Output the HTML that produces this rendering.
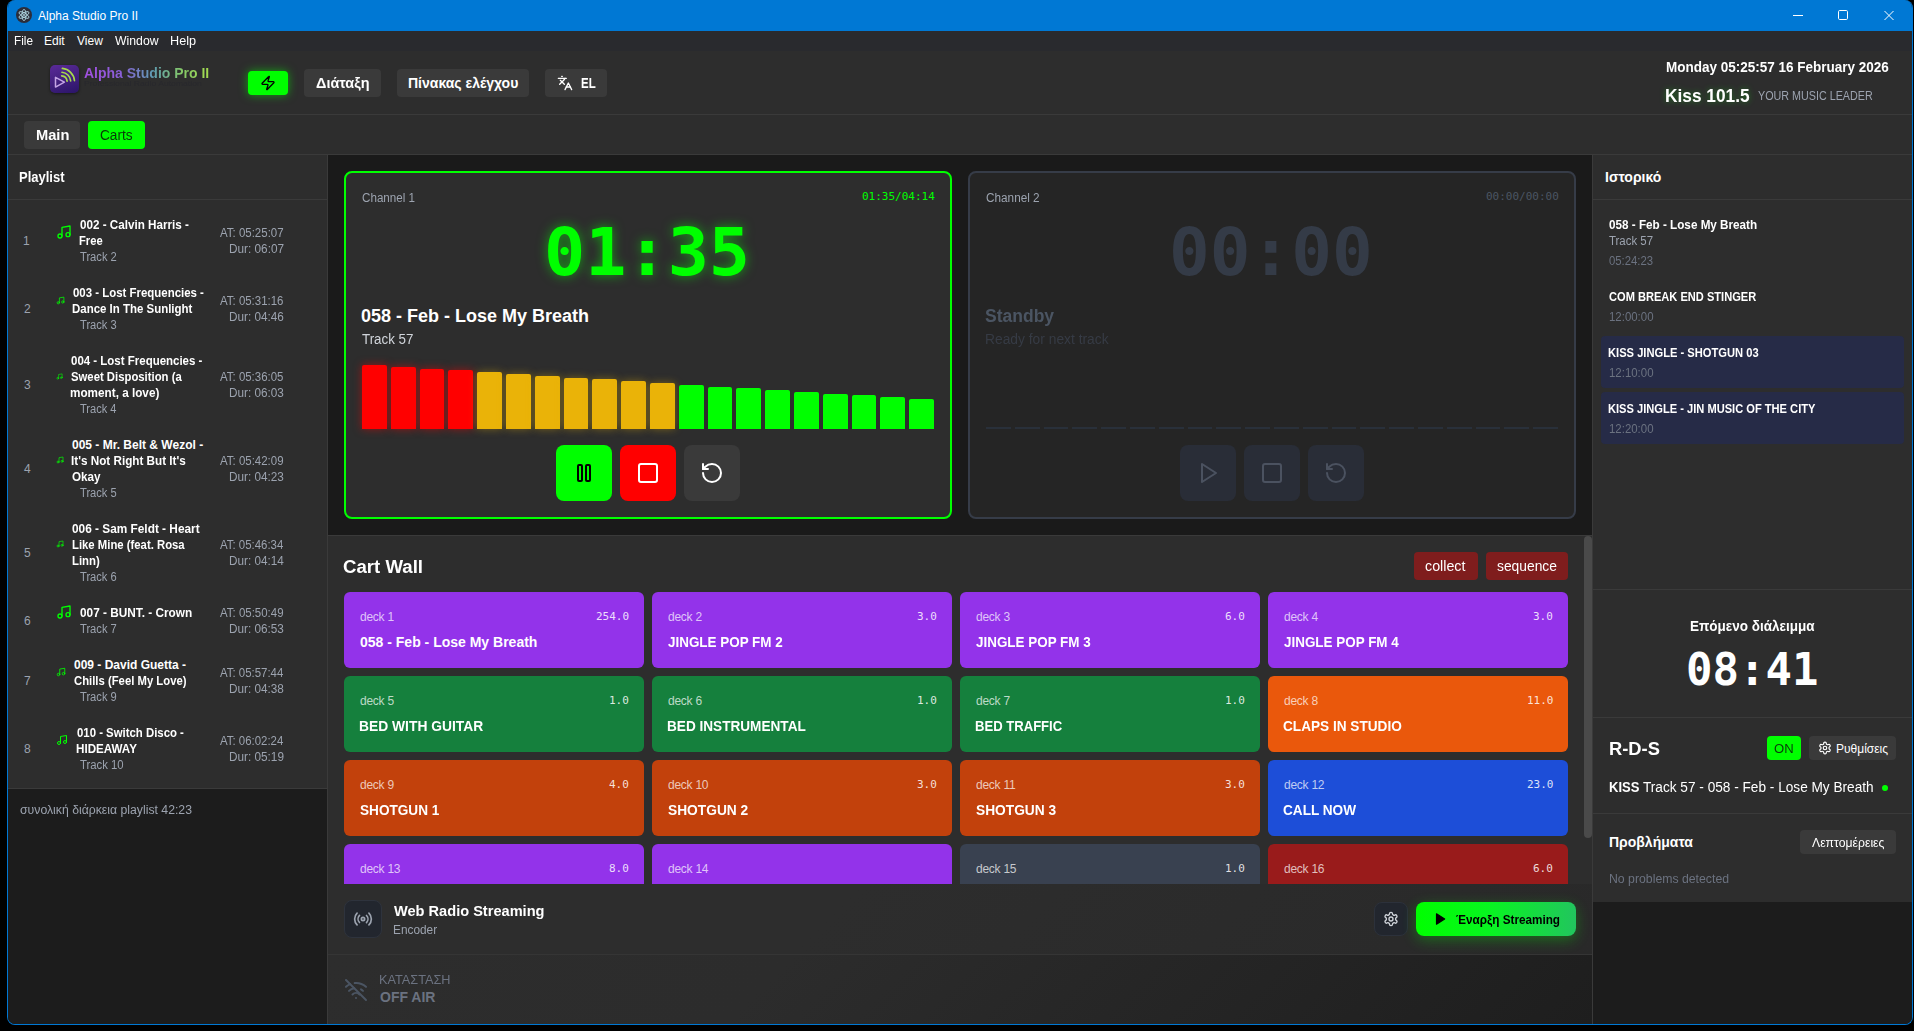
<!DOCTYPE html>
<html lang="el">
<head>
<meta charset="utf-8">
<title>Alpha Studio Pro II</title>
<style>
*{box-sizing:border-box;margin:0;padding:0}
html,body{width:1914px;height:1031px;overflow:hidden;background:#000}
body{font-family:"Liberation Sans",sans-serif;color:#fff;position:relative;font-size:12px;line-height:16px}
.a{position:absolute;white-space:nowrap}
.mono{font-family:"DejaVu Sans Mono","Liberation Mono",monospace}
.b{font-weight:bold}
svg{display:block}
.ic{fill:none;stroke:currentColor;stroke-width:2;stroke-linecap:round;stroke-linejoin:round}
#win{position:absolute;left:7px;top:0;width:1906px;height:1025px;background:#1a1a1a;border:1px solid #0078d4;border-top:none;border-radius:8px;overflow:hidden}
#pg{position:absolute;left:-8px;top:0;width:1914px;height:1031px}
.hl{position:absolute;height:1px;background:#3a3a3a}
.vl{position:absolute;width:1px;background:#3a3a3a}
.btn{position:absolute;background:#3a3a3a;border-radius:4px;color:#fff;white-space:nowrap}
.g{color:#9ca3af}
.g2{color:#6b7280}
.panel{position:absolute;background:#2d2d2d}
</style>
</head>
<body>
<div id="win"><div id="pg">
<div class="a" style="left:7px;top:0px;width:1906px;height:31px;background:#0078d4;"></div>
<div class="a" style="left:16px;top:7px;width:16px;height:16px;background:#2b2d3a;border-radius:8px;"><svg width="16" height="16" viewBox="0 0 16 16" fill="none" stroke="#b9e3ee" stroke-width="0.8"><ellipse cx="8" cy="8" rx="5.6" ry="2.1" transform="rotate(30 8 8)"/><ellipse cx="8" cy="8" rx="5.6" ry="2.1" transform="rotate(90 8 8)"/><ellipse cx="8" cy="8" rx="5.6" ry="2.1" transform="rotate(150 8 8)"/><circle cx="8" cy="8" r="0.9" fill="#b9e3ee" stroke="none"/></svg></div>
<div class="a" style="left:38px;top:9px;font-size:12px;line-height:14px;">Alpha Studio Pro II</div>
<svg class="a" style="left:1788px;top:5px" width="112" height="20" viewBox="0 0 112 20" fill="none" stroke="#fff" stroke-width="1"><path d="M5 10.5h10"/><rect x="50.5" y="5.5" width="9" height="9" rx="1.2"/><path d="M96.5 6l9 9M105.5 6l-9 9"/></svg>
<div class="a" style="left:8px;top:31px;width:1904px;height:20px;background:#292a2e;"></div>
<div class="a" style="left:13.56px;top:34px;font-size:12px;line-height:14px;transform:scaleX(0.9787);transform-origin:0 0;">File</div>
<div class="a" style="left:44px;top:34px;font-size:12px;line-height:14px;">Edit</div>
<div class="a" style="left:77px;top:34px;font-size:12px;line-height:14px;">View</div>
<div class="a" style="left:114.94px;top:34px;font-size:12px;line-height:14px;transform:scaleX(1.0197);transform-origin:0 0;">Window</div>
<div class="a" style="left:170.49px;top:34px;font-size:12px;line-height:14px;transform:scaleX(1.0551);transform-origin:0 0;">Help</div>
<div class="a" style="left:8px;top:51px;width:1904px;height:104px;background:#2d2d2d;"></div>
<div class="a" style="left:8px;top:114px;width:1904px;height:1px;background:#3a3a3a;"></div>
<div class="a" style="left:8px;top:154px;width:1904px;height:1px;background:#3a3a3a;"></div>
<div class="a" style="left:50px;top:65px;width:29px;height:28px;border-radius:5px;background:linear-gradient(160deg,#5a2a98 0%,#43207f 50%,#2a1468 100%);box-shadow:0 1px 3px rgba(0,0,0,.5)"><svg width="29" height="28" viewBox="0 0 29 28" fill="none" stroke-linecap="round" stroke-linejoin="round"><path d="M5.5 12.3v9.8l8.9-4.9z" stroke="#c4a4e6" stroke-width="1.5"/><path d="M11.71 10.82A5.9 5.9 0 0 1 17.08 16.19" stroke="#a6d94c" stroke-width="1.7"/><path d="M12.03 7.24A9.5 9.5 0 0 1 20.66 15.87" stroke="#a6d94c" stroke-width="1.7"/><path d="M12.36 3.45A13.3 13.3 0 0 1 24.45 15.54" stroke="#a6d94c" stroke-width="1.7"/></svg></div>
<div class="a b" style="left:84px;top:65px;font-size:14px;line-height:16px;background:linear-gradient(90deg,#a24fe0 0%,#8a5fd8 30%,#5f9bb0 55%,#84c868 78%,#a4dc50 100%);-webkit-background-clip:text;background-clip:text;color:transparent;">Alpha Studio Pro II</div>
<div class="a" style="left:83.81px;top:80px;font-size:7px;line-height:7px;transform:scaleX(1.2301);transform-origin:0 0;color:#28282d;">Professional Radio Automation</div>
<div class="a" style="left:248px;top:71px;width:40px;height:24px;background:#00ff00;border-radius:4px;box-shadow:0 0 10px rgba(0,255,0,.55);"></div>
<svg class="ic a" style="left:260px;top:75px;color:#000;" width="16" height="16" viewBox="0 0 24 24" stroke-width="2"><path d="M4 14a1 1 0 0 1-.78-1.63l9.9-10.2a.5.5 0 0 1 .86.46l-1.92 6.02A1 1 0 0 0 13 10h7a1 1 0 0 1 .78 1.63l-9.9 10.2a.5.5 0 0 1-.86-.46l1.92-6.02A1 1 0 0 0 11 14z"/></svg>
<div class="a" style="left:304px;top:69px;width:77px;height:28px;background:#3a3a3a;border-radius:4px;"></div>
<div class="a b" style="left:315.92px;top:75px;font-size:14px;line-height:16px;transform:scaleX(1.0317);transform-origin:0 0;">Διάταξη</div>
<div class="a" style="left:397px;top:69px;width:132px;height:28px;background:#3a3a3a;border-radius:4px;"></div>
<div class="a b" style="left:408px;top:75px;font-size:14px;line-height:16px;">Πίνακας ελέγχου</div>
<div class="a" style="left:545px;top:69px;width:62px;height:28px;background:#3a3a3a;border-radius:4px;"></div>
<svg class="ic a" style="left:557px;top:75px;color:#fff;" width="16" height="16" viewBox="0 0 24 24" stroke-width="2"><path d="m5 8 6 6"/><path d="m4 14 6-6 2-3"/><path d="M2 5h12"/><path d="M7 2h1"/><path d="m22 22-5-10-5 10"/><path d="M14 18h6"/></svg>
<div class="a b" style="left:580.76px;top:75px;font-size:14px;line-height:16px;transform:scaleX(0.8172);transform-origin:0 0;">EL</div>
<div class="a b" style="left:1665.72px;top:59px;font-size:14px;line-height:16px;transform:scaleX(0.9637);transform-origin:0 0;">Monday 05:25:57 16 February 2026</div>
<div class="a b" style="left:1665.48px;top:86px;font-size:18px;line-height:20px;transform:scaleX(0.9606);transform-origin:0 0;text-shadow:0 0 6px rgba(0,255,0,.35);">Kiss 101.5</div>
<div class="a" style="left:1758.28px;top:89px;font-size:12px;line-height:14px;transform:scaleX(0.8962);transform-origin:0 0;color:#9ca3af;">YOUR MUSIC LEADER</div>
<div class="a" style="left:24px;top:121px;width:56px;height:28px;background:#3a3a3a;border-radius:4px;"></div>
<div class="a b" style="left:35.55px;top:127px;font-size:14px;line-height:16px;transform:scaleX(1.0465);transform-origin:0 0;">Main</div>
<div class="a" style="left:88px;top:121px;width:57px;height:28px;background:#00ff00;border-radius:4px;"></div>
<div class="a" style="left:100.32px;top:127px;font-size:14px;line-height:16px;transform:scaleX(0.9761);transform-origin:0 0;color:#083808;">Carts</div>
<div class="a" style="left:8px;top:155px;width:319px;height:634px;background:#2d2d2d;"></div>
<div class="a" style="left:8px;top:789px;width:319px;height:236px;background:#1c1c1c;"></div>
<div class="a" style="left:327px;top:155px;width:1px;height:870px;background:#3a3a3a;"></div>
<div class="a" style="left:8px;top:199px;width:319px;height:1px;background:#3a3a3a;"></div>
<div class="a" style="left:8px;top:788px;width:319px;height:1px;background:#3a3a3a;"></div>
<div class="a b" style="left:19.16px;top:169px;font-size:14px;line-height:16px;transform:scaleX(0.9281);transform-origin:0 0;">Playlist</div>
<div class="a" style="left:23px;top:234px;font-size:12px;line-height:14px;color:#9ca3af;">1</div>
<svg class="ic a" style="left:56px;top:224px;color:#00ff00;" width="16" height="16" viewBox="0 0 24 24" stroke-width="2"><path d="M9 18V5l12-2v13"/><circle cx="6" cy="18" r="3"/><circle cx="18" cy="16" r="3"/></svg>
<div class="a b" style="left:79.53px;top:218px;font-size:12px;line-height:14px;transform:scaleX(0.9719);transform-origin:0 0;">002 - Calvin Harris -</div>
<div class="a b" style="left:79.27px;top:234px;font-size:12px;line-height:14px;transform:scaleX(0.9305);transform-origin:0 0;">Free</div>
<div class="a" style="left:80.28px;top:250px;font-size:12px;line-height:14px;transform:scaleX(0.9302);transform-origin:0 0;color:#9ca3af;">Track 2</div>
<div class="a" style="left:220.00px;top:226px;font-size:12px;line-height:14px;transform:scaleX(0.9563);transform-origin:0 0;color:#9ca3af;">AT: 05:25:07</div>
<div class="a" style="left:228.56px;top:242px;font-size:12px;line-height:14px;transform:scaleX(0.9820);transform-origin:0 0;color:#9ca3af;">Dur: 06:07</div>
<div class="a" style="left:24px;top:302px;font-size:12px;line-height:14px;color:#9ca3af;">2</div>
<svg class="ic a" style="left:56px;top:295.5px;color:#00ff00;" width="9" height="9" viewBox="0 0 24 24" stroke-width="2"><path d="M9 18V5l12-2v13"/><circle cx="6" cy="18" r="3"/><circle cx="18" cy="16" r="3"/></svg>
<div class="a b" style="left:72.54px;top:286px;font-size:12px;line-height:14px;transform:scaleX(0.9528);transform-origin:0 0;">003 - Lost Frequencies -</div>
<div class="a b" style="left:72.25px;top:302px;font-size:12px;line-height:14px;transform:scaleX(0.9552);transform-origin:0 0;">Dance In The Sunlight</div>
<div class="a" style="left:80.28px;top:318px;font-size:12px;line-height:14px;transform:scaleX(0.9274);transform-origin:0 0;color:#9ca3af;">Track 3</div>
<div class="a" style="left:220.00px;top:294px;font-size:12px;line-height:14px;transform:scaleX(0.9545);transform-origin:0 0;color:#9ca3af;">AT: 05:31:16</div>
<div class="a" style="left:228.56px;top:310px;font-size:12px;line-height:14px;transform:scaleX(0.9799);transform-origin:0 0;color:#9ca3af;">Dur: 04:46</div>
<div class="a" style="left:24px;top:378px;font-size:12px;line-height:14px;color:#9ca3af;">3</div>
<svg class="ic a" style="left:56px;top:372.5px;color:#00ff00;" width="7" height="7" viewBox="0 0 24 24" stroke-width="2"><path d="M9 18V5l12-2v13"/><circle cx="6" cy="18" r="3"/><circle cx="18" cy="16" r="3"/></svg>
<div class="a b" style="left:70.54px;top:354px;font-size:12px;line-height:14px;transform:scaleX(0.9565);transform-origin:0 0;">004 - Lost Frequencies -</div>
<div class="a b" style="left:70.66px;top:370px;font-size:12px;line-height:14px;transform:scaleX(0.9435);transform-origin:0 0;">Sweet Disposition (a</div>
<div class="a b" style="left:70.24px;top:386px;font-size:12px;line-height:14px;transform:scaleX(0.9778);transform-origin:0 0;">moment, a love)</div>
<div class="a" style="left:80.28px;top:402px;font-size:12px;line-height:14px;transform:scaleX(0.9231);transform-origin:0 0;color:#9ca3af;">Track 4</div>
<div class="a" style="left:220.00px;top:370px;font-size:12px;line-height:14px;transform:scaleX(0.9545);transform-origin:0 0;color:#9ca3af;">AT: 05:36:05</div>
<div class="a" style="left:228.56px;top:386px;font-size:12px;line-height:14px;transform:scaleX(0.9799);transform-origin:0 0;color:#9ca3af;">Dur: 06:03</div>
<div class="a" style="left:24px;top:462px;font-size:12px;line-height:14px;color:#9ca3af;">4</div>
<svg class="ic a" style="left:56px;top:456px;color:#00ff00;" width="8" height="8" viewBox="0 0 24 24" stroke-width="2"><path d="M9 18V5l12-2v13"/><circle cx="6" cy="18" r="3"/><circle cx="18" cy="16" r="3"/></svg>
<div class="a b" style="left:72px;top:438px;font-size:12px;line-height:14px;">005 - Mr. Belt &amp; Wezol -</div>
<div class="a b" style="left:71.24px;top:454px;font-size:12px;line-height:14px;transform:scaleX(0.9751);transform-origin:0 0;">It's Not Right But It's</div>
<div class="a b" style="left:71.53px;top:470px;font-size:12px;line-height:14px;transform:scaleX(0.9722);transform-origin:0 0;">Okay</div>
<div class="a" style="left:80.28px;top:486px;font-size:12px;line-height:14px;transform:scaleX(0.9274);transform-origin:0 0;color:#9ca3af;">Track 5</div>
<div class="a" style="left:220.00px;top:454px;font-size:12px;line-height:14px;transform:scaleX(0.9554);transform-origin:0 0;color:#9ca3af;">AT: 05:42:09</div>
<div class="a" style="left:228.56px;top:470px;font-size:12px;line-height:14px;transform:scaleX(0.9799);transform-origin:0 0;color:#9ca3af;">Dur: 04:23</div>
<div class="a" style="left:24px;top:546px;font-size:12px;line-height:14px;color:#9ca3af;">5</div>
<svg class="ic a" style="left:56px;top:540px;color:#00ff00;" width="8" height="8" viewBox="0 0 24 24" stroke-width="2"><path d="M9 18V5l12-2v13"/><circle cx="6" cy="18" r="3"/><circle cx="18" cy="16" r="3"/></svg>
<div class="a b" style="left:72.03px;top:522px;font-size:12px;line-height:14px;transform:scaleX(0.9863);transform-origin:0 0;">006 - Sam Feldt - Heart</div>
<div class="a b" style="left:71.76px;top:538px;font-size:12px;line-height:14px;transform:scaleX(0.9437);transform-origin:0 0;">Like Mine (feat. Rosa</div>
<div class="a b" style="left:71.76px;top:554px;font-size:12px;line-height:14px;transform:scaleX(0.9478);transform-origin:0 0;">Linn)</div>
<div class="a" style="left:80.28px;top:570px;font-size:12px;line-height:14px;transform:scaleX(0.9274);transform-origin:0 0;color:#9ca3af;">Track 6</div>
<div class="a" style="left:220.00px;top:538px;font-size:12px;line-height:14px;transform:scaleX(0.9519);transform-origin:0 0;color:#9ca3af;">AT: 05:46:34</div>
<div class="a" style="left:228.56px;top:554px;font-size:12px;line-height:14px;transform:scaleX(0.9766);transform-origin:0 0;color:#9ca3af;">Dur: 04:14</div>
<div class="a" style="left:24px;top:614px;font-size:12px;line-height:14px;color:#9ca3af;">6</div>
<svg class="ic a" style="left:56px;top:604px;color:#00ff00;" width="16" height="16" viewBox="0 0 24 24" stroke-width="2"><path d="M9 18V5l12-2v13"/><circle cx="6" cy="18" r="3"/><circle cx="18" cy="16" r="3"/></svg>
<div class="a b" style="left:79.53px;top:606px;font-size:12px;line-height:14px;transform:scaleX(0.9840);transform-origin:0 0;">007 - BUNT. - Crown</div>
<div class="a" style="left:80.28px;top:622px;font-size:12px;line-height:14px;transform:scaleX(0.9302);transform-origin:0 0;color:#9ca3af;">Track 7</div>
<div class="a" style="left:220.00px;top:606px;font-size:12px;line-height:14px;transform:scaleX(0.9554);transform-origin:0 0;color:#9ca3af;">AT: 05:50:49</div>
<div class="a" style="left:228.56px;top:622px;font-size:12px;line-height:14px;transform:scaleX(0.9799);transform-origin:0 0;color:#9ca3af;">Dur: 06:53</div>
<div class="a" style="left:24px;top:674px;font-size:12px;line-height:14px;color:#9ca3af;">7</div>
<svg class="ic a" style="left:56px;top:667px;color:#00ff00;" width="10" height="10" viewBox="0 0 24 24" stroke-width="2"><path d="M9 18V5l12-2v13"/><circle cx="6" cy="18" r="3"/><circle cx="18" cy="16" r="3"/></svg>
<div class="a b" style="left:74px;top:658px;font-size:12px;line-height:14px;">009 - David Guetta -</div>
<div class="a b" style="left:73.55px;top:674px;font-size:12px;line-height:14px;transform:scaleX(0.9424);transform-origin:0 0;">Chills (Feel My Love)</div>
<div class="a" style="left:80.28px;top:690px;font-size:12px;line-height:14px;transform:scaleX(0.9288);transform-origin:0 0;color:#9ca3af;">Track 9</div>
<div class="a" style="left:220.00px;top:666px;font-size:12px;line-height:14px;transform:scaleX(0.9519);transform-origin:0 0;color:#9ca3af;">AT: 05:57:44</div>
<div class="a" style="left:228.56px;top:682px;font-size:12px;line-height:14px;transform:scaleX(0.9799);transform-origin:0 0;color:#9ca3af;">Dur: 04:38</div>
<div class="a" style="left:24px;top:742px;font-size:12px;line-height:14px;color:#9ca3af;">8</div>
<svg class="ic a" style="left:56px;top:734px;color:#00ff00;" width="12" height="12" viewBox="0 0 24 24" stroke-width="2"><path d="M9 18V5l12-2v13"/><circle cx="6" cy="18" r="3"/><circle cx="18" cy="16" r="3"/></svg>
<div class="a b" style="left:76.54px;top:726px;font-size:12px;line-height:14px;transform:scaleX(0.9483);transform-origin:0 0;">010 - Switch Disco -</div>
<div class="a b" style="left:76.24px;top:742px;font-size:12px;line-height:14px;transform:scaleX(0.9690);transform-origin:0 0;">HIDEAWAY</div>
<div class="a" style="left:80.27px;top:758px;font-size:12px;line-height:14px;transform:scaleX(0.9442);transform-origin:0 0;color:#9ca3af;">Track 10</div>
<div class="a" style="left:220.00px;top:734px;font-size:12px;line-height:14px;transform:scaleX(0.9519);transform-origin:0 0;color:#9ca3af;">AT: 06:02:24</div>
<div class="a" style="left:228.56px;top:750px;font-size:12px;line-height:14px;transform:scaleX(0.9809);transform-origin:0 0;color:#9ca3af;">Dur: 05:19</div>
<div class="a" style="left:19.51px;top:803px;font-size:12px;line-height:14px;transform:scaleX(1.0204);transform-origin:0 0;color:#9ca3af;">συνολική διάρκεια playlist 42:23</div>
<div class="a" style="left:344px;top:171px;width:608px;height:348px;background:#2d2d2d;border-radius:8px;border:2px solid #00ff00;"></div>
<div class="a" style="left:361.92px;top:191px;font-size:12px;line-height:14px;transform:scaleX(0.9705);transform-origin:0 0;color:#9ca3af;">Channel 1</div>
<div class="a mono" style="left:862px;top:190px;font-size:11px;line-height:13px;color:#00ff00;">01:35/04:14</div>
<div class="a b mono" style="left:543.94px;top:214px;font-size:66px;line-height:77px;transform:scaleX(1.0372);transform-origin:0 0;color:#00ff00;text-shadow:0 0 12px rgba(0,255,0,.55);">01:35</div>
<div class="a b" style="left:361px;top:306px;font-size:18px;line-height:20px;">058 - Feb - Lose My Breath</div>
<div class="a" style="left:361.73px;top:331px;font-size:14px;line-height:16px;transform:scaleX(0.9543);transform-origin:0 0;color:#d1d5db;">Track 57</div>
<div class="a" style="left:362px;top:365px;width:24.8px;height:64px;background:#ff0000;border-radius:2px 2px 0 0;box-shadow:0 0 8px rgba(255,0,0,.5);"></div>
<div class="a" style="left:390.8px;top:366.8px;width:24.8px;height:62.2px;background:#ff0000;border-radius:2px 2px 0 0;box-shadow:0 0 8px rgba(255,0,0,.5);"></div>
<div class="a" style="left:419.6px;top:368.6px;width:24.8px;height:60.4px;background:#ff0000;border-radius:2px 2px 0 0;box-shadow:0 0 8px rgba(255,0,0,.5);"></div>
<div class="a" style="left:448.4px;top:370.4px;width:24.8px;height:58.6px;background:#ff0000;border-radius:2px 2px 0 0;box-shadow:0 0 8px rgba(255,0,0,.5);"></div>
<div class="a" style="left:477.2px;top:372.2px;width:24.8px;height:56.8px;background:#eab308;border-radius:2px 2px 0 0;box-shadow:0 0 8px rgba(234,179,8,.4);"></div>
<div class="a" style="left:506px;top:373.9px;width:24.8px;height:55px;background:#eab308;border-radius:2px 2px 0 0;box-shadow:0 0 8px rgba(234,179,8,.4);"></div>
<div class="a" style="left:534.8px;top:375.7px;width:24.8px;height:53.3px;background:#eab308;border-radius:2px 2px 0 0;box-shadow:0 0 8px rgba(234,179,8,.4);"></div>
<div class="a" style="left:563.6px;top:377.5px;width:24.8px;height:51.5px;background:#eab308;border-radius:2px 2px 0 0;box-shadow:0 0 8px rgba(234,179,8,.4);"></div>
<div class="a" style="left:592.4px;top:379.3px;width:24.8px;height:49.7px;background:#eab308;border-radius:2px 2px 0 0;box-shadow:0 0 8px rgba(234,179,8,.4);"></div>
<div class="a" style="left:621.2px;top:381.1px;width:24.8px;height:47.9px;background:#eab308;border-radius:2px 2px 0 0;box-shadow:0 0 8px rgba(234,179,8,.4);"></div>
<div class="a" style="left:650px;top:382.9px;width:24.8px;height:46.1px;background:#eab308;border-radius:2px 2px 0 0;box-shadow:0 0 8px rgba(234,179,8,.4);"></div>
<div class="a" style="left:678.8px;top:384.7px;width:24.8px;height:44.3px;background:#00ff00;border-radius:2px 2px 0 0;"></div>
<div class="a" style="left:707.6px;top:386.5px;width:24.8px;height:42.5px;background:#00ff00;border-radius:2px 2px 0 0;"></div>
<div class="a" style="left:736.4px;top:388.3px;width:24.8px;height:40.7px;background:#00ff00;border-radius:2px 2px 0 0;"></div>
<div class="a" style="left:765.2px;top:390.1px;width:24.8px;height:38.9px;background:#00ff00;border-radius:2px 2px 0 0;"></div>
<div class="a" style="left:794px;top:391.9px;width:24.8px;height:37.1px;background:#00ff00;border-radius:2px 2px 0 0;"></div>
<div class="a" style="left:822.8px;top:393.6px;width:24.8px;height:35.4px;background:#00ff00;border-radius:2px 2px 0 0;"></div>
<div class="a" style="left:851.6px;top:395.4px;width:24.8px;height:33.6px;background:#00ff00;border-radius:2px 2px 0 0;"></div>
<div class="a" style="left:880.4px;top:397.2px;width:24.8px;height:31.8px;background:#00ff00;border-radius:2px 2px 0 0;"></div>
<div class="a" style="left:909.2px;top:399px;width:24.8px;height:30px;background:#00ff00;border-radius:2px 2px 0 0;"></div>
<div class="a" style="left:556px;top:445px;width:56px;height:56px;background:#00ff00;border-radius:8px;"></div>
<svg class="ic a" style="left:572px;top:461px;color:#000;" width="24" height="24" viewBox="0 0 24 24" stroke-width="2"><rect x="14" y="4" width="4" height="16" rx="1"/><rect x="6" y="4" width="4" height="16" rx="1"/></svg>
<div class="a" style="left:620px;top:445px;width:56px;height:56px;background:#ff0000;border-radius:8px;"></div>
<svg class="ic a" style="left:636px;top:461px;color:#fff;" width="24" height="24" viewBox="0 0 24 24" stroke-width="2"><rect width="18" height="18" x="3" y="3" rx="2"/></svg>
<div class="a" style="left:684px;top:445px;width:56px;height:56px;background:#3a3a3a;border-radius:8px;"></div>
<svg class="ic a" style="left:700px;top:461px;color:#fff;" width="24" height="24" viewBox="0 0 24 24" stroke-width="2"><path d="M3 12a9 9 0 1 0 9-9 9.75 9.75 0 0 0-6.74 2.74L3 8"/><path d="M3 3v5h5"/></svg>
<div class="a" style="left:968px;top:171px;width:608px;height:348px;background:#252525;border-radius:8px;border:2px solid #363c48;"></div>
<div class="a" style="left:985.91px;top:191px;font-size:12px;line-height:14px;transform:scaleX(0.9809);transform-origin:0 0;color:#9ca3af;">Channel 2</div>
<div class="a mono" style="left:1486px;top:190px;font-size:11px;line-height:13px;color:#4b5563;">00:00/00:00</div>
<div class="a b mono" style="left:1169.34px;top:214px;font-size:66px;line-height:77px;transform:scaleX(1.0258);transform-origin:0 0;color:#343b47;">00:00</div>
<div class="a b" style="left:985.47px;top:306px;font-size:18px;line-height:20px;transform:scaleX(0.9733);transform-origin:0 0;color:#4b5563;">Standby</div>
<div class="a" style="left:984.90px;top:331px;font-size:14px;line-height:16px;transform:scaleX(0.9865);transform-origin:0 0;color:#363b45;">Ready for next track</div>
<div class="a" style="left:986px;top:427px;width:24.8px;height:2px;background:#29303a;"></div>
<div class="a" style="left:1014.8px;top:427px;width:24.8px;height:2px;background:#29303a;"></div>
<div class="a" style="left:1043.6px;top:427px;width:24.8px;height:2px;background:#29303a;"></div>
<div class="a" style="left:1072.4px;top:427px;width:24.8px;height:2px;background:#29303a;"></div>
<div class="a" style="left:1101.2px;top:427px;width:24.8px;height:2px;background:#29303a;"></div>
<div class="a" style="left:1130px;top:427px;width:24.8px;height:2px;background:#29303a;"></div>
<div class="a" style="left:1158.8px;top:427px;width:24.8px;height:2px;background:#29303a;"></div>
<div class="a" style="left:1187.6px;top:427px;width:24.8px;height:2px;background:#29303a;"></div>
<div class="a" style="left:1216.4px;top:427px;width:24.8px;height:2px;background:#29303a;"></div>
<div class="a" style="left:1245.2px;top:427px;width:24.8px;height:2px;background:#29303a;"></div>
<div class="a" style="left:1274px;top:427px;width:24.8px;height:2px;background:#29303a;"></div>
<div class="a" style="left:1302.8px;top:427px;width:24.8px;height:2px;background:#29303a;"></div>
<div class="a" style="left:1331.6px;top:427px;width:24.8px;height:2px;background:#29303a;"></div>
<div class="a" style="left:1360.4px;top:427px;width:24.8px;height:2px;background:#29303a;"></div>
<div class="a" style="left:1389.2px;top:427px;width:24.8px;height:2px;background:#29303a;"></div>
<div class="a" style="left:1418px;top:427px;width:24.8px;height:2px;background:#29303a;"></div>
<div class="a" style="left:1446.8px;top:427px;width:24.8px;height:2px;background:#29303a;"></div>
<div class="a" style="left:1475.6px;top:427px;width:24.8px;height:2px;background:#29303a;"></div>
<div class="a" style="left:1504.4px;top:427px;width:24.8px;height:2px;background:#29303a;"></div>
<div class="a" style="left:1533.2px;top:427px;width:24.8px;height:2px;background:#29303a;"></div>
<div class="a" style="left:1180px;top:445px;width:56px;height:56px;background:#292d37;border-radius:8px;"></div>
<svg class="ic a" style="left:1196px;top:461px;color:#4b5260;" width="24" height="24" viewBox="0 0 24 24" stroke-width="2"><polygon points="6 3 20 12 6 21 6 3"/></svg>
<div class="a" style="left:1244px;top:445px;width:56px;height:56px;background:#292d37;border-radius:8px;"></div>
<svg class="ic a" style="left:1260px;top:461px;color:#4b5260;" width="24" height="24" viewBox="0 0 24 24" stroke-width="2"><rect width="18" height="18" x="3" y="3" rx="2"/></svg>
<div class="a" style="left:1308px;top:445px;width:56px;height:56px;background:#292d37;border-radius:8px;"></div>
<svg class="ic a" style="left:1324px;top:461px;color:#4b5260;" width="24" height="24" viewBox="0 0 24 24" stroke-width="2"><path d="M3 12a9 9 0 1 0 9-9 9.75 9.75 0 0 0-6.74 2.74L3 8"/><path d="M3 3v5h5"/></svg>
<div class="a" style="left:328px;top:535px;width:1264px;height:1px;background:#3a3a3a;"></div>
<div class="a" style="left:328px;top:536px;width:1264px;height:489px;background:#2d2d2d;"></div>
<div class="a" style="left:1592px;top:155px;width:1px;height:870px;background:#3a3a3a;"></div>
<div class="a b" style="left:343.26px;top:557px;font-size:18px;line-height:20px;transform:scaleX(1.0342);transform-origin:0 0;">Cart Wall</div>
<div class="a" style="left:1414px;top:552px;width:64px;height:28px;background:#7f1d1d;border-radius:4px;"></div>
<div class="a" style="left:1425.23px;top:558px;font-size:14px;line-height:16px;transform:scaleX(1.0182);transform-origin:0 0;">collect</div>
<div class="a" style="left:1486px;top:552px;width:82px;height:28px;background:#7f1d1d;border-radius:4px;"></div>
<div class="a" style="left:1497.15px;top:558px;font-size:14px;line-height:16px;transform:scaleX(0.9870);transform-origin:0 0;">sequence</div>
<div class="a" style="left:328px;top:536px;width:1264px;height:348px;overflow:hidden">
<div class="a" style="left:16px;top:56px;width:300px;height:76px;background:#9333ea;border-radius:6px;"></div>
<div class="a" style="left:32px;top:74px;font-size:12px;line-height:14px;letter-spacing:-0.250px;color:rgba(255,255,255,.72);">deck 1</div>
<div class="a mono" style="left:268px;top:74px;font-size:11px;line-height:13px;color:rgba(255,255,255,.85);">254.0</div>
<div class="a b" style="left:32px;top:98px;font-size:14px;line-height:16px;">058 - Feb - Lose My Breath</div>
<div class="a" style="left:324px;top:56px;width:300px;height:76px;background:#9333ea;border-radius:6px;"></div>
<div class="a" style="left:340px;top:74px;font-size:12px;line-height:14px;letter-spacing:-0.250px;color:rgba(255,255,255,.72);">deck 2</div>
<div class="a mono" style="left:589px;top:74px;font-size:11px;line-height:13px;color:rgba(255,255,255,.85);">3.0</div>
<div class="a b" style="left:339.80px;top:98px;font-size:14px;line-height:16px;transform:scaleX(0.9597);transform-origin:0 0;">JINGLE POP FM 2</div>
<div class="a" style="left:632px;top:56px;width:300px;height:76px;background:#9333ea;border-radius:6px;"></div>
<div class="a" style="left:648px;top:74px;font-size:12px;line-height:14px;letter-spacing:-0.250px;color:rgba(255,255,255,.72);">deck 3</div>
<div class="a mono" style="left:897px;top:74px;font-size:11px;line-height:13px;color:rgba(255,255,255,.85);">6.0</div>
<div class="a b" style="left:647.80px;top:98px;font-size:14px;line-height:16px;transform:scaleX(0.9591);transform-origin:0 0;">JINGLE POP FM 3</div>
<div class="a" style="left:940px;top:56px;width:300px;height:76px;background:#9333ea;border-radius:6px;"></div>
<div class="a" style="left:956px;top:74px;font-size:12px;line-height:14px;letter-spacing:-0.250px;color:rgba(255,255,255,.72);">deck 4</div>
<div class="a mono" style="left:1205px;top:74px;font-size:11px;line-height:13px;color:rgba(255,255,255,.85);">3.0</div>
<div class="a b" style="left:955.80px;top:98px;font-size:14px;line-height:16px;transform:scaleX(0.9599);transform-origin:0 0;">JINGLE POP FM 4</div>
<div class="a" style="left:16px;top:140px;width:300px;height:76px;background:#15803d;border-radius:6px;"></div>
<div class="a" style="left:32px;top:158px;font-size:12px;line-height:14px;letter-spacing:-0.250px;color:rgba(255,255,255,.72);">deck 5</div>
<div class="a mono" style="left:281px;top:158px;font-size:11px;line-height:13px;color:rgba(255,255,255,.85);">1.0</div>
<div class="a b" style="left:31.10px;top:182px;font-size:14px;line-height:16px;transform:scaleX(0.9877);transform-origin:0 0;">BED WITH GUITAR</div>
<div class="a" style="left:324px;top:140px;width:300px;height:76px;background:#15803d;border-radius:6px;"></div>
<div class="a" style="left:340px;top:158px;font-size:12px;line-height:14px;letter-spacing:-0.250px;color:rgba(255,255,255,.72);">deck 6</div>
<div class="a mono" style="left:589px;top:158px;font-size:11px;line-height:13px;color:rgba(255,255,255,.85);">1.0</div>
<div class="a b" style="left:339.12px;top:182px;font-size:14px;line-height:16px;transform:scaleX(0.9715);transform-origin:0 0;">BED INSTRUMENTAL</div>
<div class="a" style="left:632px;top:140px;width:300px;height:76px;background:#15803d;border-radius:6px;"></div>
<div class="a" style="left:648px;top:158px;font-size:12px;line-height:14px;letter-spacing:-0.250px;color:rgba(255,255,255,.72);">deck 7</div>
<div class="a mono" style="left:897px;top:158px;font-size:11px;line-height:13px;color:rgba(255,255,255,.85);">1.0</div>
<div class="a b" style="left:647.15px;top:182px;font-size:14px;line-height:16px;transform:scaleX(0.9343);transform-origin:0 0;">BED TRAFFIC</div>
<div class="a" style="left:940px;top:140px;width:300px;height:76px;background:#ea580c;border-radius:6px;"></div>
<div class="a" style="left:956px;top:158px;font-size:12px;line-height:14px;letter-spacing:-0.250px;color:rgba(255,255,255,.72);">deck 8</div>
<div class="a mono" style="left:1199px;top:158px;font-size:11px;line-height:13px;color:rgba(255,255,255,.85);">11.0</div>
<div class="a b" style="left:955.46px;top:182px;font-size:14px;line-height:16px;transform:scaleX(0.9730);transform-origin:0 0;">CLAPS IN STUDIO</div>
<div class="a" style="left:16px;top:224px;width:300px;height:76px;background:#c2410c;border-radius:6px;"></div>
<div class="a" style="left:32px;top:242px;font-size:12px;line-height:14px;letter-spacing:-0.250px;color:rgba(255,255,255,.72);">deck 9</div>
<div class="a mono" style="left:281px;top:242px;font-size:11px;line-height:13px;color:rgba(255,255,255,.85);">4.0</div>
<div class="a b" style="left:31.59px;top:266px;font-size:14px;line-height:16px;transform:scaleX(0.9713);transform-origin:0 0;">SHOTGUN 1</div>
<div class="a" style="left:324px;top:224px;width:300px;height:76px;background:#c2410c;border-radius:6px;"></div>
<div class="a" style="left:340px;top:242px;font-size:12px;line-height:14px;letter-spacing:-0.250px;color:rgba(255,255,255,.72);">deck 10</div>
<div class="a mono" style="left:589px;top:242px;font-size:11px;line-height:13px;color:rgba(255,255,255,.85);">3.0</div>
<div class="a b" style="left:339.59px;top:266px;font-size:14px;line-height:16px;transform:scaleX(0.9825);transform-origin:0 0;">SHOTGUN 2</div>
<div class="a" style="left:632px;top:224px;width:300px;height:76px;background:#c2410c;border-radius:6px;"></div>
<div class="a" style="left:648px;top:242px;font-size:12px;line-height:14px;letter-spacing:-0.250px;color:rgba(255,255,255,.72);">deck 11</div>
<div class="a mono" style="left:897px;top:242px;font-size:11px;line-height:13px;color:rgba(255,255,255,.85);">3.0</div>
<div class="a b" style="left:647.59px;top:266px;font-size:14px;line-height:16px;transform:scaleX(0.9817);transform-origin:0 0;">SHOTGUN 3</div>
<div class="a" style="left:940px;top:224px;width:300px;height:76px;background:#1d4ed8;border-radius:6px;"></div>
<div class="a" style="left:956px;top:242px;font-size:12px;line-height:14px;letter-spacing:-0.250px;color:rgba(255,255,255,.72);">deck 12</div>
<div class="a mono" style="left:1199px;top:242px;font-size:11px;line-height:13px;color:rgba(255,255,255,.85);">23.0</div>
<div class="a b" style="left:955.46px;top:266px;font-size:14px;line-height:16px;transform:scaleX(0.9716);transform-origin:0 0;">CALL NOW</div>
<div class="a" style="left:16px;top:308px;width:300px;height:76px;background:#9333ea;border-radius:6px;"></div>
<div class="a" style="left:32px;top:326px;font-size:12px;line-height:14px;letter-spacing:-0.250px;color:rgba(255,255,255,.72);">deck 13</div>
<div class="a mono" style="left:281px;top:326px;font-size:11px;line-height:13px;color:rgba(255,255,255,.85);">8.0</div>
<div class="a" style="left:324px;top:308px;width:300px;height:76px;background:#9333ea;border-radius:6px;"></div>
<div class="a" style="left:340px;top:326px;font-size:12px;line-height:14px;letter-spacing:-0.250px;color:rgba(255,255,255,.72);">deck 14</div>
<div class="a" style="left:632px;top:308px;width:300px;height:76px;background:#394150;border-radius:6px;"></div>
<div class="a" style="left:648px;top:326px;font-size:12px;line-height:14px;letter-spacing:-0.250px;color:rgba(255,255,255,.72);">deck 15</div>
<div class="a mono" style="left:897px;top:326px;font-size:11px;line-height:13px;color:rgba(255,255,255,.85);">1.0</div>
<div class="a" style="left:940px;top:308px;width:300px;height:76px;background:#991b1b;border-radius:6px;"></div>
<div class="a" style="left:956px;top:326px;font-size:12px;line-height:14px;letter-spacing:-0.250px;color:rgba(255,255,255,.72);">deck 16</div>
<div class="a mono" style="left:1205px;top:326px;font-size:11px;line-height:13px;color:rgba(255,255,255,.85);">6.0</div>
</div>
<div class="a" style="left:1584px;top:536px;width:8px;height:302px;background:#4a4a4a;border-radius:4px;"></div>
<div class="a" style="left:328px;top:884px;width:1264px;height:71px;background:linear-gradient(135deg,#2d2d2d 0%,#2d2d2d 40%,#292929 100%);"></div>
<div class="a" style="left:328px;top:954px;width:1264px;height:1px;background:#353535;"></div>
<div class="a" style="left:328px;top:955px;width:1264px;height:70px;background:linear-gradient(135deg,#2d2d2d 0%,#2c2c2c 35%,#1e1e1e 100%);"></div>
<div class="a" style="left:344px;top:900px;width:38px;height:38px;background:#22262e;border-radius:8px;border:1px solid #2e333d;"></div>
<svg class="ic a" style="left:353px;top:909px;color:#9ca3af;" width="20" height="20" viewBox="0 0 24 24" stroke-width="2"><path d="M4.9 19.1C1 15.2 1 8.8 4.9 4.9"/><path d="M7.8 16.2c-2.3-2.3-2.3-6.1 0-8.5"/><circle cx="12" cy="12" r="2"/><path d="M16.2 7.8c2.3 2.3 2.3 6.1 0 8.5"/><path d="M19.1 4.9C23 8.8 23 15.1 19.1 19"/></svg>
<div class="a b" style="left:394.00px;top:903px;font-size:14px;line-height:16px;transform:scaleX(1.0418);transform-origin:0 0;">Web Radio Streaming</div>
<div class="a" style="left:393.05px;top:923px;font-size:12px;line-height:14px;transform:scaleX(0.9871);transform-origin:0 0;color:#9ca3af;">Encoder</div>
<div class="a" style="left:1374px;top:902px;width:34px;height:34px;background:#22262e;border-radius:8px;border:1px solid #2c313b;"></div>
<svg class="ic a" style="left:1383px;top:911px;color:#d1d5db;" width="16" height="16" viewBox="0 0 24 24" stroke-width="2"><path d="M12.22 2h-.44a2 2 0 0 0-2 2v.18a2 2 0 0 1-1 1.73l-.43.25a2 2 0 0 1-2 0l-.15-.08a2 2 0 0 0-2.73.73l-.22.38a2 2 0 0 0 .73 2.73l.15.1a2 2 0 0 1 1 1.72v.51a2 2 0 0 1-1 1.74l-.15.09a2 2 0 0 0-.73 2.73l.22.38a2 2 0 0 0 2.73.73l.15-.08a2 2 0 0 1 2 0l.43.25a2 2 0 0 1 1 1.73V20a2 2 0 0 0 2 2h.44a2 2 0 0 0 2-2v-.18a2 2 0 0 1 1-1.73l.43-.25a2 2 0 0 1 2 0l.15.08a2 2 0 0 0 2.73-.73l.22-.39a2 2 0 0 0-.73-2.73l-.15-.08a2 2 0 0 1-1-1.74v-.5a2 2 0 0 1 1-1.74l.15-.09a2 2 0 0 0 .73-2.73l-.22-.38a2 2 0 0 0-2.73-.73l-.15.08a2 2 0 0 1-2 0l-.43-.25a2 2 0 0 1-1-1.73V4a2 2 0 0 0-2-2z"/><circle cx="12" cy="12" r="3"/></svg>
<div class="a" style="left:1416px;top:902px;width:160px;height:34px;border-radius:8px;background:linear-gradient(90deg,#00ff00 0%,#08f520 45%,#22c55e 100%);box-shadow:0 4px 14px rgba(0,255,0,.3);"></div>
<svg class="a" style="left:1433px;top:912px" width="14" height="14" viewBox="0 0 24 24" fill="#000" stroke="#000" stroke-width="2" stroke-linejoin="round"><polygon points="6 3 20 12 6 21 6 3"/></svg>
<div class="a b" style="left:1455.77px;top:913px;font-size:12.5px;line-height:14px;transform:scaleX(0.9385);transform-origin:0 0;color:#000;">Έναρξη Streaming</div>
<svg class="ic a" style="left:344px;top:977.5px;color:#4b5563;" width="24" height="24" viewBox="0 0 24 24" stroke-width="2"><path d="M12 20h.01"/><path d="M8.5 16.429a5 5 0 0 1 7 0"/><path d="M5 12.859a10 10 0 0 1 5.17-2.69"/><path d="M19 12.859a10 10 0 0 0-2.007-1.523"/><path d="M2 8.82a15 15 0 0 1 4.177-2.643"/><path d="M22 8.82a15 15 0 0 0-11.288-3.764"/><path d="m2 2 20 20"/></svg>
<div class="a" style="left:378.98px;top:973px;font-size:12px;line-height:14px;transform:scaleX(1.0598);transform-origin:0 0;color:#6b7280;">ΚΑΤΑΣΤΑΣΗ</div>
<div class="a b" style="left:380px;top:989px;font-size:14px;line-height:16px;color:#6b7280;">OFF AIR</div>
<div class="a" style="left:1593px;top:155px;width:319px;height:747px;background:#2d2d2d;"></div>
<div class="a" style="left:1593px;top:902px;width:319px;height:123px;background:#1c1c1c;"></div>
<div class="a" style="left:1593px;top:199px;width:319px;height:1px;background:#3a3a3a;"></div>
<div class="a b" style="left:1605px;top:169px;font-size:14px;line-height:16px;">Ιστορικό</div>
<div class="a b" style="left:1608.53px;top:218px;font-size:12px;line-height:14px;transform:scaleX(0.9745);transform-origin:0 0;">058 - Feb - Lose My Breath</div>
<div class="a" style="left:1609.07px;top:234px;font-size:12px;line-height:14px;transform:scaleX(0.9524);transform-origin:0 0;color:#9ca3af;">Track 57</div>
<div class="a" style="left:1608.85px;top:254px;font-size:12px;line-height:14px;transform:scaleX(0.9449);transform-origin:0 0;color:#6b7280;">05:24:23</div>
<div class="a b" style="left:1608.56px;top:290px;font-size:12px;line-height:14px;transform:scaleX(0.9238);transform-origin:0 0;">COM BREAK END STINGER</div>
<div class="a" style="left:1608.94px;top:310px;font-size:12px;line-height:14px;transform:scaleX(0.9524);transform-origin:0 0;color:#6b7280;">12:00:00</div>
<div class="a" style="left:1601px;top:336px;width:303px;height:52px;background:#262b47;border-radius:4px;"></div>
<div class="a b" style="left:1608.27px;top:346px;font-size:12px;line-height:14px;transform:scaleX(0.9297);transform-origin:0 0;">KISS JINGLE - SHOTGUN 03</div>
<div class="a" style="left:1608.94px;top:366px;font-size:12px;line-height:14px;transform:scaleX(0.9524);transform-origin:0 0;color:#6b7280;">12:10:00</div>
<div class="a" style="left:1601px;top:392px;width:303px;height:52px;background:#262b47;border-radius:4px;"></div>
<div class="a b" style="left:1608.28px;top:402px;font-size:12px;line-height:14px;transform:scaleX(0.9259);transform-origin:0 0;">KISS JINGLE - JIN MUSIC OF THE CITY</div>
<div class="a" style="left:1608.94px;top:422px;font-size:12px;line-height:14px;transform:scaleX(0.9524);transform-origin:0 0;color:#6b7280;">12:20:00</div>
<div class="a" style="left:1593px;top:589px;width:319px;height:1px;background:#3a3a3a;"></div>
<div class="a b" style="left:1690.12px;top:618px;font-size:14px;line-height:16px;transform:scaleX(0.9646);transform-origin:0 0;">Επόμενο διάλειμμα</div>
<div class="a b mono" style="left:1686px;top:644px;font-size:44px;line-height:51px;">08:41</div>
<div class="a" style="left:1593px;top:717px;width:319px;height:1px;background:#3a3a3a;"></div>
<div class="a b" style="left:1608.81px;top:739px;font-size:18px;line-height:20px;transform:scaleX(1.0177);transform-origin:0 0;">R-D-S</div>
<div class="a" style="left:1767px;top:736px;width:34px;height:24px;background:#00ff00;border-radius:4px;"></div>
<div class="a" style="left:1773.91px;top:742px;font-size:12px;line-height:14px;transform:scaleX(1.0909);transform-origin:0 0;color:#0a3a0a;">ON</div>
<div class="a" style="left:1809px;top:736px;width:87px;height:24px;background:#3a3a3a;border-radius:4px;"></div>
<svg class="ic a" style="left:1818px;top:741px;color:#fff;" width="14" height="14" viewBox="0 0 24 24" stroke-width="2"><path d="M12.22 2h-.44a2 2 0 0 0-2 2v.18a2 2 0 0 1-1 1.73l-.43.25a2 2 0 0 1-2 0l-.15-.08a2 2 0 0 0-2.73.73l-.22.38a2 2 0 0 0 .73 2.73l.15.1a2 2 0 0 1 1 1.72v.51a2 2 0 0 1-1 1.74l-.15.09a2 2 0 0 0-.73 2.73l.22.38a2 2 0 0 0 2.73.73l.15-.08a2 2 0 0 1 2 0l.43.25a2 2 0 0 1 1 1.73V20a2 2 0 0 0 2 2h.44a2 2 0 0 0 2-2v-.18a2 2 0 0 1 1-1.73l.43-.25a2 2 0 0 1 2 0l.15.08a2 2 0 0 0 2.73-.73l.22-.39a2 2 0 0 0-.73-2.73l-.15-.08a2 2 0 0 1-1-1.74v-.5a2 2 0 0 1 1-1.74l.15-.09a2 2 0 0 0 .73-2.73l-.22-.38a2 2 0 0 0-2.73-.73l-.15.08a2 2 0 0 1-2 0l-.43-.25a2 2 0 0 1-1-1.73V4a2 2 0 0 0-2-2z"/><circle cx="12" cy="12" r="3"/></svg>
<div class="a" style="left:1836px;top:742px;font-size:12px;line-height:14px;">Ρυθμίσεις</div>
<div class="a b" style="left:1608.65px;top:779px;font-size:14px;line-height:16px;transform:scaleX(0.9289);transform-origin:0 0;">KISS</div>
<div class="a" style="left:1642.73px;top:779px;font-size:14px;line-height:16px;transform:scaleX(0.9740);transform-origin:0 0;">Track 57 - 058 - Feb - Lose My Breath</div>
<div class="a" style="left:1882px;top:785px;width:6px;height:6px;background:#00ff00;border-radius:3px;"></div>
<div class="a" style="left:1593px;top:813px;width:319px;height:1px;background:#3a3a3a;"></div>
<div class="a b" style="left:1609px;top:834px;font-size:14px;line-height:16px;">Προβλήματα</div>
<div class="a" style="left:1800px;top:830px;width:96px;height:24px;background:#3a3a3a;border-radius:4px;"></div>
<div class="a" style="left:1812.44px;top:836px;font-size:12px;line-height:14px;transform:scaleX(1.0187);transform-origin:0 0;">Λεπτομέρειες</div>
<div class="a" style="left:1608.82px;top:872px;font-size:12px;line-height:14px;transform:scaleX(1.0226);transform-origin:0 0;color:#6b7280;">No problems detected</div>
</div></div>
</body>
</html>
